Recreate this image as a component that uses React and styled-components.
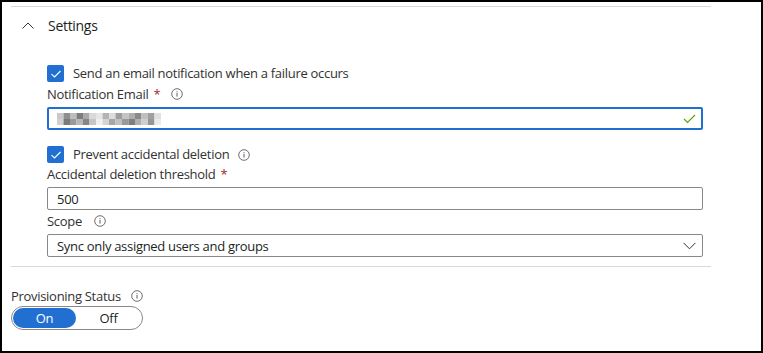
import React from 'react';
import styled, { createGlobalStyle } from 'styled-components';

const Global = createGlobalStyle`
  html, body { margin: 0; padding: 0; background: #fff; }
  body { font-family: "Open Sans", "Noto Sans", sans-serif; }
`;

const Frame = styled.div`
  width: 763px;
  height: 353px;
  box-sizing: border-box;
  border: 2px solid #000;
  background: #fff;
  padding: 4px 0 0 9px;
  color: #323130;
  font-size: 13px;
  letter-spacing: -0.3px;
  overflow: hidden;
`;

const Divider = styled.div`
  width: 700px;
  height: 1px;
  background: #d8d8d8;
  margin-top: ${p => p.$top || 0}px;
`;

const Header = styled.div`
  display: flex;
  align-items: center;
  height: 36px;
  padding-left: 11px;
  gap: 14px;
  font-size: 14px;
  color: #201f1e;
`;

const Content = styled.div`
  padding-left: 36px;
  width: 656px;
  display: flex;
  flex-direction: column;
`;

const CheckRow = styled.div`
  display: flex;
  align-items: center;
  height: 17px;
  gap: 9px;
  margin-top: ${p => p.$top}px;
  line-height: 17px;
`;

const Box = styled.span`
  width: 17px;
  height: 17px;
  background: #2170d1;
  border-radius: 2px;
  display: flex;
  align-items: center;
  justify-content: center;
`;

const Label = styled.div`
  display: flex;
  align-items: center;
  height: 20px;
  line-height: 20px;
  margin-top: ${p => p.$top || 0}px;
`;

const Star = styled.span`
  color: #a4262c;
  margin-left: 5px;
`;

const Info = styled.span`
  display: inline-flex;
  margin-left: ${p => p.$gap}px;
`;

const Field = styled.div`
  box-sizing: border-box;
  height: 23px;
  margin-top: 3px;
  border: ${p => (p.$active ? '2px solid #1f6fd2' : '1px solid #8a8886')};
  border-radius: 2px;
  display: flex;
  align-items: center;
  justify-content: space-between;
  padding: 0 ${p => (p.$active ? 5 : 6)}px 0 ${p => (p.$active ? 8 : 9)}px;
  color: #201f1e;
`;

const StatusBlock = styled.div`
  margin-top: 19px;
`;

const Toggle = styled.div`
  box-sizing: border-box;
  width: 132px;
  height: 24px;
  border: 1px solid #8a8886;
  border-radius: 12px;
  padding: 1px;
  display: flex;
  align-items: stretch;
`;

const Seg = styled.div`
  flex: ${p => (p.$on ? '0 0 63px' : '1')};
  border-radius: 10px;
  background: ${p => (p.$on ? '#2170d1' : 'transparent')};
  color: ${p => (p.$on ? '#fff' : '#201f1e')};
  display: flex;
  align-items: center;
  justify-content: center;
  font-size: 13px;
`;

const InfoIcon = () => (
  <svg width="12" height="12" viewBox="0 0 12 12">
    <circle cx="6" cy="6" r="5.3" fill="none" stroke="#605e5c" strokeWidth="0.9" />
    <rect x="5.5" y="5" width="1" height="3.6" fill="#605e5c" />
    <rect x="5.5" y="3.2" width="1" height="1" fill="#605e5c" />
  </svg>
);

const CheckMark = () => (
  <svg width="12" height="10" viewBox="0 0 12 10">
    <path d="M1.5 5.2 L4.5 8 L10.5 2" fill="none" stroke="#fff" strokeWidth="1.1" />
  </svg>
);

const Mosaic = () => {
  const top = ['#c9c9c9', '#8f8f8f', '#bdbdbd', '#7d7d7d', '#a9a9a9', '#d9d9d9', '#e6e6e6', '#b3b3b3', '#dcdcdc', '#9e9e9e', '#c4c4c4', '#adadad', '#8a8a8a', '#bfbfbf', '#a0a0a0', '#e0e0e0'];
  const bot = ['#d0d0d0', '#7a7a7a', '#9a9a9a', '#b8b8b8', '#858585', '#c6c6c6', '#f0f0f0', '#d4d4d4', '#a6a6a6', '#c0c0c0', '#999999', '#7f7f7f', '#b0b0b0', '#cfcfcf', '#969696', '#ebebeb'];
  return (
    <svg width="104" height="12" viewBox="0 0 104 12">
      {top.map((c, i) => (
        <rect key={'t' + i} x={i * 6.5} y="0" width="6.5" height="6" fill={c} />
      ))}
      {bot.map((c, i) => (
        <rect key={'b' + i} x={i * 6.5} y="6" width="6.5" height="6" fill={c} />
      ))}
    </svg>
  );
};

export default function App() {
  return (
    <>
      <Global />
      <Frame>
        <Divider />
        <Header>
          <svg width="12" height="7" viewBox="0 0 12 7">
            <path d="M0.5 6.5 L6 1 L11.5 6.5" fill="none" stroke="#323130" strokeWidth="1" />
          </svg>
          <span>Settings</span>
        </Header>
        <Content>
          <CheckRow $top={22}>
            <Box><CheckMark /></Box>
            <span>Send an email notification when a failure occurs</span>
          </CheckRow>
          <Label $top={2}>
            Notification Email<Star>*</Star>
            <Info $gap={11}><InfoIcon /></Info>
          </Label>
          <Field $active>
            <Mosaic />
            <svg width="13" height="10" viewBox="0 0 13 10">
              <path d="M1 5 L4.5 8.5 L12 1" fill="none" stroke="#57a300" strokeWidth="1.1" />
            </svg>
          </Field>
          <CheckRow $top={16}>
            <Box><CheckMark /></Box>
            <span>Prevent accidental deletion</span>
            <Info $gap={0}><InfoIcon /></Info>
          </CheckRow>
          <Label $top={1}>
            Accidental deletion threshold<Star>*</Star>
          </Label>
          <Field>500</Field>
          <Label $top={1}>
            Scope
            <Info $gap={12}><InfoIcon /></Info>
          </Label>
          <Field>
            <span>Sync only assigned users and groups</span>
            <svg width="13" height="8" viewBox="0 0 13 8">
              <path d="M0.5 0.8 L6.5 6.8 L12.5 0.8" fill="none" stroke="#323130" strokeWidth="1" />
            </svg>
          </Field>
        </Content>
        <Divider $top={9} />
        <StatusBlock>
          <Label>
            Provisioning Status
            <Info $gap={10}><InfoIcon /></Info>
          </Label>
          <Toggle>
            <Seg $on>On</Seg>
            <Seg>Off</Seg>
          </Toggle>
        </StatusBlock>
      </Frame>
    </>
  );
}
